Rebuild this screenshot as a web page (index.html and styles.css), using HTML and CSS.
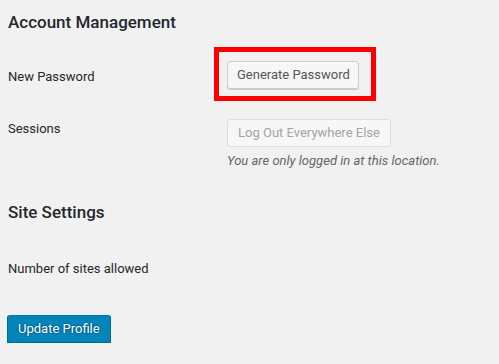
FILE: index.html
```html
<!DOCTYPE html>
<html lang="en">
<head>
    <meta charset="UTF-8">
    <title>Profile</title>
    <link rel="stylesheet" href="styles.css">
</head>
<body>

<div class="wrap">
    <h2 class="section-title">Account Management</h2>

    <div class="row row-password">
        <div class="row-label">New Password</div>
        <div class="row-field">
            <span class="highlight">
                <button class="button" type="button">Generate Password</button>
            </span>
        </div>
    </div>

    <div class="row row-sessions">
        <div class="row-label">Sessions</div>
        <div class="row-field">
            <button class="button" type="button" disabled>Log Out Everywhere Else</button>
            <p class="description">You are only logged in at this location.</p>
        </div>
    </div>

    <h2 class="section-title site-title">Site Settings</h2>

    <div class="row row-sites">
        <div class="row-label">Number of sites allowed</div>
        <div class="row-field"></div>
    </div>

    <p class="submit">
        <button class="button button-primary" type="submit">Update Profile</button>
    </p>
</div>

</body>
</html>
```
FILE: styles.css
```css
body {
    margin: 0;
    background-color: #f1f1f1;
    color: #23282d;
    font-family: Roboto, "Liberation Sans", sans-serif;
    font-size: 13px;
    line-height: 20px;
}
.wrap {
    padding: 0 8px;
}
.section-title {
    margin: 10px 0 0;
    font-size: 17px;
    font-weight: 500;
    line-height: 24px;
}
.site-title {
    margin-top: 29px;
}
.row {
    display: flex;
}
.row-label {
    width: 219px;
    flex: none;
}
.row-password .row-label {
    padding-top: 33px;
}
.row-password .row-field {
    padding-top: 27px;
}
.row-sessions .row-label,
.row-sessions .row-field {
    padding-top: 30px;
}
.row-sites .row-label {
    padding-top: 35px;
}
.description {
    margin: 4px 0 0;
    font-style: italic;
    color: #666;
}
.button {
    display: inline-block;
    height: 28px;
    margin: 0;
    padding: 0 10px 1px;
    font-family: inherit;
    font-size: 13px;
    line-height: 26px;
    color: #555;
    background: #f7f7f7;
    border: 1px solid #ccc;
    border-radius: 3px;
    box-shadow: 0 1px 0 #ccc;
    vertical-align: top;
    cursor: pointer;
}
.highlight .button {
    padding: 0 8px 1px 9px;
}
.button:disabled {
    color: #a0a5aa;
    border-color: #ddd;
    box-shadow: none;
    cursor: default;
}
.button-primary {
    background: #0085ba;
    border-color: #0073aa #006799 #006799;
    box-shadow: 0 1px 0 #006799;
    color: #fff;
    text-shadow: 0 -1px 1px #006799, 1px 0 1px #006799, 0 1px 1px #006799, -1px 0 1px #006799;
}
.highlight {
    position: relative;
    display: inline-block;
    vertical-align: top;
}
.highlight::after {
    content: "";
    position: absolute;
    top: -14px;
    right: -17px;
    bottom: -12px;
    left: -13px;
    border: 5px solid #ff0000;
    pointer-events: none;
}
.submit {
    margin: 36px 0 0 -1px;
}
```
